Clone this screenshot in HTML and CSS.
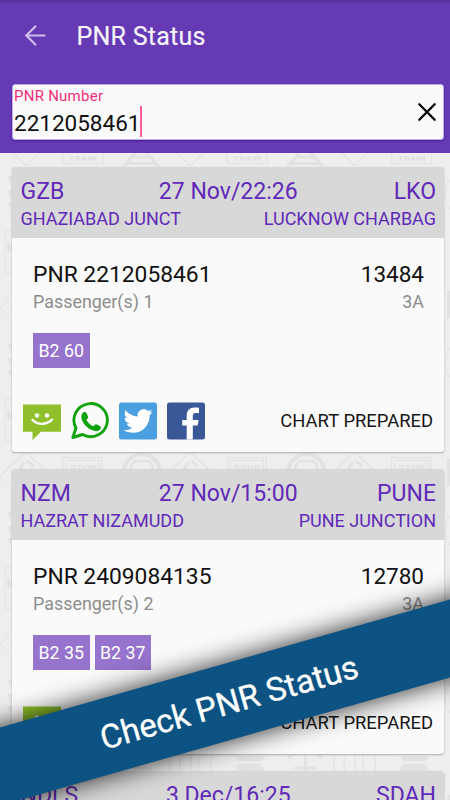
FILE: index.html
```html
<!DOCTYPE html>
<html lang="en">
<head>
<meta charset="utf-8">
<title>PNR Status</title>
<link rel="stylesheet" href="styles.css">
</head>
<body>
<svg class="defs" width="0" height="0" aria-hidden="true">
  <defs>
    <symbol id="sms" viewBox="0 0 38 38"><path fill="#8fc02b" d="M0 2.5h38v27.300H18L9.500 38V29.800H0z"/><circle cx="14" cy="13.500" r="2.300" fill="#fafafa"/><circle cx="24" cy="13.500" r="2.300" fill="#fafafa"/><path d="M9.500 17.700c5 5.500 14 5.500 19.500 0" fill="none" stroke="#fafafa" stroke-width="2.400" stroke-linecap="round"/></symbol>
    <symbol id="whatsapp" viewBox="0 0 38 38"><path d="M1.800 35.500 5 26A16.700 16.500 0 1 1 11.500 32.500Z" fill="#fafafa" stroke="#11a30d" stroke-width="2.900" stroke-linejoin="round"/><path fill="#11a30d" d="M11 12c1.300-2.500 3.900-2.500 4.600-.8l1.500 3.600c.4 1-.5 2-1.700 3.200 1.700 3 3.900 5 7 6.300 1.300-1.600 2-2.500 3-2l3.800 1.900c1.500.8.3 3.500-1.700 4.500-3 1.500-8.500-.7-12-4.200-4-3.700-6.400-8.900-4.500-12.500z"/></symbol>
    <symbol id="twitter" viewBox="0 0 38 38"><rect y=".5" width="38" height="37" rx="2.500" fill="#4a9fe0"/><path fill="#fff" transform="translate(4.500 4.500) scale(1.210)" d="M23.953 4.570a10 10 0 01-2.825.775 4.958 4.958 0 002.163-2.723c-.951.555-2.005.959-3.127 1.184a4.920 4.920 0 00-8.384 4.482C7.690 8.095 4.067 6.130 1.640 3.162a4.822 4.822 0 00-.666 2.475c0 1.710.870 3.213 2.188 4.096a4.904 4.904 0 01-2.228-.616v.060a4.923 4.923 0 003.946 4.827 4.996 4.996 0 01-2.212.085 4.936 4.936 0 004.604 3.417 9.867 9.867 0 01-6.102 2.105c-.390 0-.779-.023-1.170-.067a13.995 13.995 0 007.557 2.209c9.053 0 13.998-7.496 13.998-13.985 0-.210 0-.420-.015-.630A9.935 9.935 0 0024 4.590z"/></symbol>
    <symbol id="facebook" viewBox="0 0 38 38"><rect y=".5" width="38" height="37" rx="2.500" fill="#3a5897"/><path fill="#fff" d="M19.700 37.500V23.500H15.200v-5.500h4.500v-4.200c0-5.300 3-8.300 7.800-8.300 2 0 3.500.1 4.500.3v5.100h-3c-2.500 0-3.200 1.200-3.200 3v4.100h5.700l-.8 5.500h-4.900v14z"/></symbol>
    <g id="motifs" fill="none" stroke="#e2e2e3" stroke-width="1.200">
      <path d="M2 142 26 166 50 142"/>
      <rect x="63" y="130" width="40" height="33.500" rx="1"/>
      <text x="83" y="160.500" class="sign" textLength="28" lengthAdjust="spacingAndGlyphs">TRAIN</text>
      <path d="M136 152 123 167M146 152 159 167M132 157h18M125 163.500h32" stroke-width="3"/>
      <path d="M0 476 26 452.500 52 476"/><path d="M24 462 20 469M27 461l7 5" stroke-width="3"/>
      <rect x="63" y="457.500" width="39" height="28"/><rect x="66" y="460.500" width="33" height="24"/>
      <text x="83" y="469.500" class="sign" textLength="27" lengthAdjust="spacingAndGlyphs">STOP</text>
      <circle cx="142" cy="472" r="18" stroke-width="4"/><rect x="131" y="461" width="22" height="18" rx="7" stroke-width="2.500"/>
      <path d="M71 756h30l-4 5H75zM74 764h23l3 7H71z" fill="#e2e2e3" stroke="none"/>
      <path d="M141 754v17M129 754l-5 4M153 754l5 4M130 768h22" stroke-width="3"/>
      <path d="M170 754v18M180 754v18M191 754v18M199 754v18M211 754v18"/>
    </g>
    <g id="edge" fill="#e2e2e3" stroke="#e2e2e3">
      <path stroke="none" d="M7 176h5v9zM7 190h5v9zM7 202h5v9z"/>
      <path fill="none" d="M12 231.500H5v41h7M12 294 0 309l12 12"/><path stroke="none" d="M7 243h5v8H7z"/>
      <path fill="none" d="M451 178q-12 15 0 33"/><path stroke="none" d="M447 291h4v27h-4z"/>
    </g>
  </defs>
</svg>
<div class="screen">
  <svg class="wallpaper" viewBox="0 0 450 800" aria-hidden="true">
    <use href="#motifs"/><use href="#motifs" x="164.300"/><use href="#motifs" x="328.600"/>
    <use href="#edge"/><use href="#edge" y="168"/><use href="#edge" y="336"/><use href="#edge" y="504"/>
  </svg>
  <header class="appbar">
    <div class="titlebar">
      <svg class="back" viewBox="0 0 20 20"><path d="M19.500 10H1.500M10.500.8 1.300 10l9.200 9.200" fill="none" stroke="#cdbdeb" stroke-width="2.100"/></svg>
      <h1>PNR Status</h1>
    </div>
    <div class="field">
      <div class="entry">
        <label>PNR Number</label>
        <div class="value"><span>2212058461</span><i class="caret"></i></div>
      </div>
      <svg class="clear" viewBox="0 0 18 18"><path d="m1.300 1.300 15.400 15.400M16.700 1.300 1.300 16.700" fill="none" stroke="#000" stroke-width="2.300" stroke-linecap="round"/></svg>
    </div>
  </header>
  <main class="list">
    <article class="card">
      <div class="route">
        <div class="codes"><span>GZB</span><span>27 Nov/22:26</span><span>LKO</span></div>
        <div class="stations"><span>GHAZIABAD JUNCT</span><span>LUCKNOW CHARBAG</span></div>
      </div>
      <div class="body">
        <div class="main"><span class="pnr">PNR 2212058461</span><span>13484</span></div>
        <div class="sub"><span>Passenger(s) 1</span><span>3A</span></div>
        <div class="seats"><span>B2 60</span></div>
      </div>
      <div class="actions">
        <svg><use href="#sms"/></svg><svg><use href="#whatsapp"/></svg><svg><use href="#twitter"/></svg><svg><use href="#facebook"/></svg>
        <span>CHART PREPARED</span>
      </div>
    </article>
    <article class="card">
      <div class="route">
        <div class="codes"><span>NZM</span><span>27 Nov/15:00</span><span>PUNE</span></div>
        <div class="stations"><span>HAZRAT NIZAMUDD</span><span>PUNE JUNCTION</span></div>
      </div>
      <div class="body">
        <div class="main"><span class="pnr">PNR 2409084135</span><span>12780</span></div>
        <div class="sub"><span>Passenger(s) 2</span><span>3A</span></div>
        <div class="seats"><span>B2 35</span><span>B2 37</span></div>
      </div>
      <div class="actions">
        <svg><use href="#sms"/></svg><svg><use href="#whatsapp"/></svg><svg><use href="#twitter"/></svg><svg><use href="#facebook"/></svg>
        <span>CHART PREPARED</span>
      </div>
    </article>
    <article class="card">
      <div class="route">
        <div class="codes"><span>NDLS</span><span>3 Dec/16:25</span><span>SDAH</span></div>
      </div>
    </article>
  </main>
  <div class="ribbon"><span>Check PNR Status</span></div>
</div>
</body>
</html>
```
FILE: styles.css
```css
* { box-sizing: border-box; }
body { margin: 0; font-family: Roboto, "Liberation Sans", sans-serif; }
.defs { position: absolute; }
.screen { position: relative; width: 450px; height: 800px; overflow: hidden; background: #eeeeef; }
.wallpaper { position: absolute; inset: 0; width: 450px; height: 800px; }
.sign { font: bold 8px Roboto, sans-serif; text-anchor: middle; fill: #dededf; stroke: none; }
.appbar { position: relative; height: 153px; background: linear-gradient(#55309a, #673ab5 5px); padding: 0 6px 0 12px; }
.titlebar { display: flex; align-items: center; height: 84px; padding: 0 0 13px 13px; }
.back { width: 21px; height: 21px; }
h1 { margin: 2px 0 0 30.500px; color: #fff; font-size: 25px; font-weight: 400; line-height: 30px; letter-spacing: .25px; -webkit-text-stroke: .2px #fff; opacity: .95; }
.field { display: flex; align-items: center; justify-content: space-between; width: 432px; height: 56px; padding: 0 7px 0 1px; background: #fafafa; border: 1px solid #c0a9e4; border-radius: 3px; box-shadow: 0 1px 2px #471e92; }
label { display: block; color: #f22c78; font-size: 15px; line-height: 18px; letter-spacing: .25px; }
.value { display: flex; align-items: center; height: 33px; color: #111; font-size: 22.500px; }
.value span { padding-top: 4px; }
.caret { width: 2px; height: 31px; background: #ff5c98; margin-left: 0; }
.clear { width: 18px; height: 18px; }
.list { position: relative; display: flex; flex-direction: column; gap: 17px; padding: 14px 6px 0 12px; }
.card { flex: none; height: 285px; background: #fafafa; border-radius: 3px; box-shadow: 0 1px 2px #aaa; overflow: hidden; }
.route { height: 70.500px; padding: 10px 8px 0 8.500px; background: #d8d8d8; color: #6029b8; }
.codes { display: grid; grid-template-columns: 1fr auto 1fr; font-size: 23px; line-height: 29px; }
.codes span:last-child { text-align: right; }
.stations { display: flex; justify-content: space-between; font-size: 18px; line-height: 25px; }
.body { height: 161px; padding: 21px 20px 0 21px; }
.main, .sub { display: flex; justify-content: space-between; }
.main { color: #111; font-size: 22.500px; line-height: 31px; }
.pnr { font-size: 22.800px; }
.sub { color: #8d8d8d; font-size: 17.900px; line-height: 24px; }
.seats { display: flex; gap: 5px; margin-top: 19.500px; }
.seats span { width: 56.500px; height: 35px; background: #9673cd; color: #fff; font-size: 17.800px; line-height: 36px; text-align: center; }
.actions { display: flex; align-items: center; gap: 10px; height: 44px; padding: 0 11px 0 11px; }
.actions svg { width: 38px; height: 38px; }
.actions span { margin-left: auto; color: #161616; font-size: 18.400px; }
.ribbon { position: absolute; left: -75px; top: 664.500px; width: 600px; height: 75px; background: #0c5384; box-shadow: 0 0 26px rgba(0, 0, 0, .85); transform: rotate(-15.900deg); color: #fff; font-size: 33px; line-height: 77px; text-align: center; }
.ribbon span { display: inline-block; margin-left: 8px; -webkit-text-stroke: .3px #fff; }
```
